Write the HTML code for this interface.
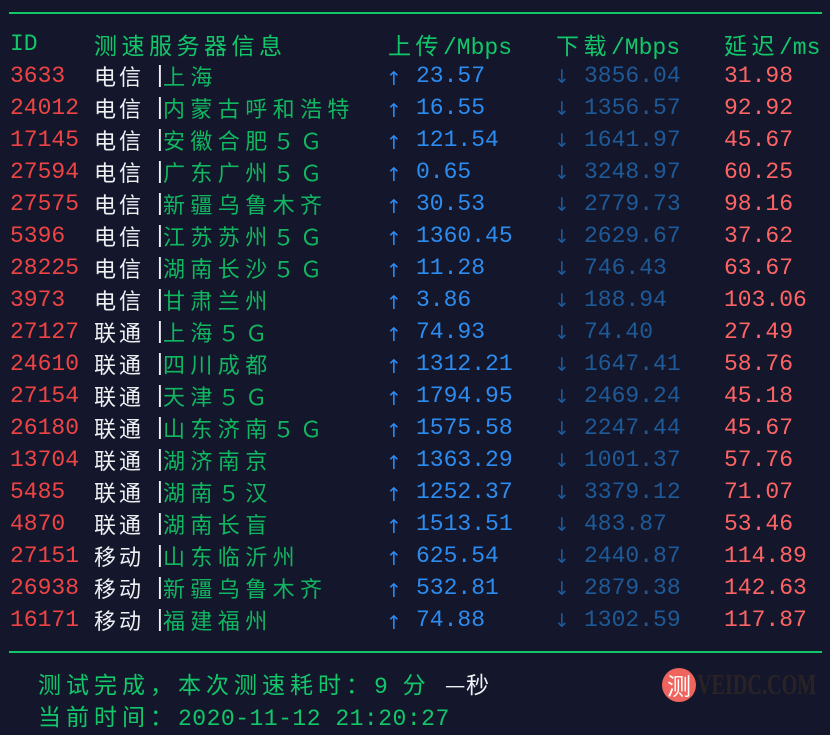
<!DOCTYPE html>
<html><head><meta charset="utf-8"><style>
html,body{margin:0;padding:0;background:#14172b;}
body{width:830px;height:731px;position:relative;overflow:hidden;font-family:"Liberation Mono","Noto Sans CJK SC",monospace;font-size:23px;}
.line{position:absolute;left:9px;width:813px;height:2px;background:#12c76a;}
.r{position:absolute;left:0;height:32px;line-height:32px;white-space:nowrap;}
.r span{position:absolute;top:1px;}
.id{left:10px;color:#ef4444;}
.isp{left:94px;color:#eef0f4;font-family:"Noto Sans CJK SC",sans-serif;font-size:22px;letter-spacing:3px;}
.bar{left:153px;color:#eef0f4;}
.city{left:163px;color:#10b760;font-family:"Noto Sans CJK SC",sans-serif;font-size:22px;letter-spacing:5.4px;}
.ua{left:386px;color:#2d8cf0;font-family:"DejaVu Sans",sans-serif;font-size:19px;top:4px!important;}
.up{left:416px;color:#2d8cf0;}
.da{left:554px;color:#1e5a98;font-family:"DejaVu Sans",sans-serif;font-size:19px;top:2px!important;}
.dn{left:584px;color:#1e5a98;}
.lat{left:724px;color:#ff6464;}
.h{color:#12c76a;}
.cj{font-family:"Noto Sans CJK SC",sans-serif;font-size:23px;letter-spacing:4.5px;}
.f{position:absolute;left:38px;color:#12c76a;font-family:"Liberation Mono","Noto Sans CJK SC",monospace;font-size:23px;letter-spacing:0.5px;line-height:32px;white-space:nowrap;}
.fc{font-family:'Noto Sans CJK SC',sans-serif;font-size:23px;letter-spacing:5px;}
</style></head><body>
<div class="line" style="top:12px"></div>
<div class="r" style="top:27px">
<span class="h" style="left:10px">ID</span>
<span class="h cj" style="left:94px">测速服务器信息</span>
<span class="h" style="left:388px"><span class="cj" style="position:static">上传</span>/Mbps</span>
<span class="h" style="left:556px"><span class="cj" style="position:static">下载</span>/Mbps</span>
<span class="h" style="left:724px"><span class="cj" style="position:static">延迟</span>/ms</span>
</div>
<div class="r" style="top:59px"><span class="id">3633</span><span class="isp">电信</span><span class="bar">|</span><span class="city">上海</span><span class="ua">↑</span><span class="up">23.57</span><span class="da">↓</span><span class="dn">3856.04</span><span class="lat">31.98</span></div>
<div class="r" style="top:91px"><span class="id">24012</span><span class="isp">电信</span><span class="bar">|</span><span class="city">内蒙古呼和浩特</span><span class="ua">↑</span><span class="up">16.55</span><span class="da">↓</span><span class="dn">1356.57</span><span class="lat">92.92</span></div>
<div class="r" style="top:123px"><span class="id">17145</span><span class="isp">电信</span><span class="bar">|</span><span class="city">安徽合肥５Ｇ</span><span class="ua">↑</span><span class="up">121.54</span><span class="da">↓</span><span class="dn">1641.97</span><span class="lat">45.67</span></div>
<div class="r" style="top:155px"><span class="id">27594</span><span class="isp">电信</span><span class="bar">|</span><span class="city">广东广州５Ｇ</span><span class="ua">↑</span><span class="up">0.65</span><span class="da">↓</span><span class="dn">3248.97</span><span class="lat">60.25</span></div>
<div class="r" style="top:187px"><span class="id">27575</span><span class="isp">电信</span><span class="bar">|</span><span class="city">新疆乌鲁木齐</span><span class="ua">↑</span><span class="up">30.53</span><span class="da">↓</span><span class="dn">2779.73</span><span class="lat">98.16</span></div>
<div class="r" style="top:219px"><span class="id">5396</span><span class="isp">电信</span><span class="bar">|</span><span class="city">江苏苏州５Ｇ</span><span class="ua">↑</span><span class="up">1360.45</span><span class="da">↓</span><span class="dn">2629.67</span><span class="lat">37.62</span></div>
<div class="r" style="top:251px"><span class="id">28225</span><span class="isp">电信</span><span class="bar">|</span><span class="city">湖南长沙５Ｇ</span><span class="ua">↑</span><span class="up">11.28</span><span class="da">↓</span><span class="dn">746.43</span><span class="lat">63.67</span></div>
<div class="r" style="top:283px"><span class="id">3973</span><span class="isp">电信</span><span class="bar">|</span><span class="city">甘肃兰州</span><span class="ua">↑</span><span class="up">3.86</span><span class="da">↓</span><span class="dn">188.94</span><span class="lat">103.06</span></div>
<div class="r" style="top:315px"><span class="id">27127</span><span class="isp">联通</span><span class="bar">|</span><span class="city">上海５Ｇ</span><span class="ua">↑</span><span class="up">74.93</span><span class="da">↓</span><span class="dn">74.40</span><span class="lat">27.49</span></div>
<div class="r" style="top:347px"><span class="id">24610</span><span class="isp">联通</span><span class="bar">|</span><span class="city">四川成都</span><span class="ua">↑</span><span class="up">1312.21</span><span class="da">↓</span><span class="dn">1647.41</span><span class="lat">58.76</span></div>
<div class="r" style="top:379px"><span class="id">27154</span><span class="isp">联通</span><span class="bar">|</span><span class="city">天津５Ｇ</span><span class="ua">↑</span><span class="up">1794.95</span><span class="da">↓</span><span class="dn">2469.24</span><span class="lat">45.18</span></div>
<div class="r" style="top:411px"><span class="id">26180</span><span class="isp">联通</span><span class="bar">|</span><span class="city">山东济南５Ｇ</span><span class="ua">↑</span><span class="up">1575.58</span><span class="da">↓</span><span class="dn">2247.44</span><span class="lat">45.67</span></div>
<div class="r" style="top:443px"><span class="id">13704</span><span class="isp">联通</span><span class="bar">|</span><span class="city">湖济南京</span><span class="ua">↑</span><span class="up">1363.29</span><span class="da">↓</span><span class="dn">1001.37</span><span class="lat">57.76</span></div>
<div class="r" style="top:475px"><span class="id">5485</span><span class="isp">联通</span><span class="bar">|</span><span class="city">湖南５汉</span><span class="ua">↑</span><span class="up">1252.37</span><span class="da">↓</span><span class="dn">3379.12</span><span class="lat">71.07</span></div>
<div class="r" style="top:507px"><span class="id">4870</span><span class="isp">联通</span><span class="bar">|</span><span class="city">湖南长盲</span><span class="ua">↑</span><span class="up">1513.51</span><span class="da">↓</span><span class="dn">483.87</span><span class="lat">53.46</span></div>
<div class="r" style="top:539px"><span class="id">27151</span><span class="isp">移动</span><span class="bar">|</span><span class="city">山东临沂州</span><span class="ua">↑</span><span class="up">625.54</span><span class="da">↓</span><span class="dn">2440.87</span><span class="lat">114.89</span></div>
<div class="r" style="top:571px"><span class="id">26938</span><span class="isp">移动</span><span class="bar">|</span><span class="city">新疆乌鲁木齐</span><span class="ua">↑</span><span class="up">532.81</span><span class="da">↓</span><span class="dn">2879.38</span><span class="lat">142.63</span></div>
<div class="r" style="top:603px"><span class="id">16171</span><span class="isp">移动</span><span class="bar">|</span><span class="city">福建福州</span><span class="ua">↑</span><span class="up">74.88</span><span class="da">↓</span><span class="dn">1302.59</span><span class="lat">117.87</span></div>
<div class="line" style="top:651px"></div>
<div class="f" style="top:667px"><span class="fc">测试完成，本次测速耗时：</span>9 <span class="fc">分</span>   <span style="color:#eef0f4;font-family:'Noto Sans CJK SC',sans-serif">—秒</span></div>
<div class="f" style="top:699px"><span class="fc">当前时间：</span>2020-11-12 21:20:27</div>
<div style="position:absolute;left:662px;top:668px;width:34px;height:34px;border-radius:17px;background:#f0645e;color:#fff;font-family:'Noto Sans CJK SC',sans-serif;font-size:24px;line-height:34px;text-align:center;">测</div>
<div style="position:absolute;left:697px;top:670px;color:#2a2326;font-family:'Liberation Serif',serif;font-weight:bold;font-size:28px;line-height:32px;transform:scaleX(0.72);transform-origin:0 0;">VEIDC.COM</div>
</body></html>
